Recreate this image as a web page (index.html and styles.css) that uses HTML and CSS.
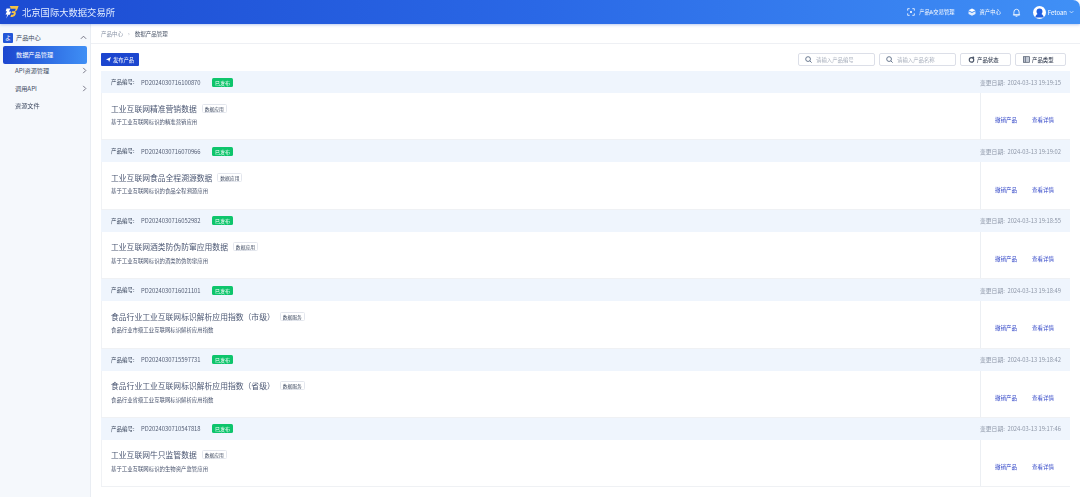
FILE: index.html
```html
<!DOCTYPE html>
<html lang="zh-CN">
<head>
<meta charset="utf-8">
<title>数据产品管理</title>
<link rel="stylesheet" href="styles.css">
</head>
<body>
<div class="app">
  <header class="topbar">
    <div class="brand">
      <svg class="logo" viewBox="0 0 14 14"><path d="M4.6 1 H13.6 L12.3 4.6 Q11.7 6.2 10 6.7 Q11.4 7.2 10.7 9.2 Q9.8 12 7.2 12 H5.4 L6.2 9.8 H7.6 Q8.4 9.8 8.7 9 Q9 8 8.1 8 H6.4 L7 6.2 H8.8 Q10 6.2 10.4 5 L10.7 3.8 H6 Z" fill="#f6c445"/><path d="M1.6 3.6 H5.6 L3.9 6.6 H6 L4.8 9.8 H3.4 L1.2 13.4 L2.4 9.4 H.5 L2.1 6.2 H.6 Z" fill="#fff"/></svg>
      <span class="brand-name">北京国际大数据交易所</span>
    </div>
    <nav class="topnav">
      <span class="topitem"><svg class="ticon" viewBox="0 0 12 12"><path d="M1 4V1h3M8 1h3v3M11 8v3H8M4 11H1V8" fill="none" stroke="#fff" stroke-width="1.2"/><circle cx="6" cy="6" r="1.6" fill="#fff"/></svg>产品&amp;交易管理</span>
      <span class="topitem"><svg class="ticon" viewBox="0 0 12 12"><path d="M6 .8 L11.2 3.4 L6 6 L.8 3.4 Z" fill="#fff"/><path d="M.8 4.8 L6 7.4 L11.2 4.8 V9 L6 11.6 L.8 9 Z" fill="#fff" opacity=".85"/></svg>资产中心</span>
      <svg class="bell" viewBox="0 0 12 12"><path d="M2.5 9.2 V5.5 a3.5 3.8 0 0 1 7 0 V9.2 Z M1.2 9.2 H10.8 M4.8 11 H7.2" fill="none" stroke="#fff" stroke-width="1.1"/></svg>
      <span class="user">
        <svg class="avatar" viewBox="0 0 14 14"><circle cx="7" cy="7" r="7" fill="#fff"/><circle cx="7" cy="6" r="3.2" fill="#1f5fe0"/><path d="M2.5 12.4 a4.5 4.4 0 0 1 9 0 Z" fill="#1f5fe0"/></svg>
        <span>Fetoan</span>
        <svg class="caret" viewBox="0 0 8 5"><path d="M1 1 L4 4 L7 1" fill="none" stroke="#fff" stroke-width="1"/></svg>
      </span>
    </nav>
  </header>
  <div class="shell">
    <aside class="sidebar">
      <div class="side-group"><span class="side-badge">よ</span><span class="side-title">产品中心</span><svg class="chev" viewBox="0 0 8 5" width="7" height="5"><path d="M1 4 L4 1 L7 4" fill="none" stroke="#667" stroke-width="1"/></svg></div>
      <div class="side-active">数据产品管理</div>
      <div class="side-item"><span>API资源管理</span><svg class="chev" viewBox="0 0 5 8" width="5" height="7"><path d="M1 1 L4 4 L1 7" fill="none" stroke="#667" stroke-width="1"/></svg></div>
      <div class="side-item"><span>调用API</span><svg class="chev" viewBox="0 0 5 8" width="5" height="7"><path d="M1 1 L4 4 L1 7" fill="none" stroke="#667" stroke-width="1"/></svg></div>
      <div class="side-item"><span>资源文件</span></div>
    </aside>
    <main class="main">
      <div class="crumbs"><span class="crumb-muted">产品中心</span><span class="crumb-sep">›</span><span class="crumb-now">数据产品管理</span></div>
      <div class="content">
        <div class="toolbar">
          <button class="primary"><svg viewBox="0 0 8 8" width="5" height="5"><path d="M0 4 L8 0 L5 8 L4 5 Z" fill="#fff"/></svg>发布产品</button>
          <div class="filters">
            <div class="search"><svg viewBox="0 0 10 10" width="7" height="7"><circle cx="4.4" cy="4.4" r="3.4" fill="none" stroke="#5b6b85" stroke-width="1.3"/><path d="M7 7 L9.5 9.5" stroke="#5b6b85" stroke-width="1.3"/></svg>请输入产品编号</div>
            <div class="search"><svg viewBox="0 0 10 10" width="7" height="7"><circle cx="4.4" cy="4.4" r="3.4" fill="none" stroke="#5b6b85" stroke-width="1.3"/><path d="M7 7 L9.5 9.5" stroke="#5b6b85" stroke-width="1.3"/></svg>请输入产品名称</div>
            <div class="filter f-status"><svg viewBox="0 0 10 10" width="7" height="7"><circle cx="5" cy="5.6" r="3.2" fill="none" stroke="#4a5568" stroke-width="1.6"/><circle cx="7.5" cy="2" r="1.4" fill="#4a5568"/></svg>产品状态</div>
            <div class="filter f-type"><svg viewBox="0 0 10 10" width="7" height="7"><rect x=".6" y="1" width="8.8" height="8" fill="#c4cad6" stroke="#4a5568"/><path d="M3.4 1 V9" stroke="#4a5568"/></svg>产品类型</div>
          </div>
        </div>
        <section class="card">
          <div class="card-head"><span class="label">产品编号:</span><span class="code">PD2024030716100870</span><span class="status">已发布</span><span class="date">变更日期:&nbsp;&nbsp;2024-03-13 19:19:15</span></div>
          <div class="card-body"><div class="info"><div class="title-row"><span class="title">工业互联网精准营销数据</span><span class="tag">数据应用</span></div><p class="desc">基于工业互联网标识的精准营销应用</p></div><div class="actions"><a>撤销产品</a><a>查看详情</a></div></div>
        </section>
        <section class="card">
          <div class="card-head"><span class="label">产品编号:</span><span class="code">PD2024030716070966</span><span class="status">已发布</span><span class="date">变更日期:&nbsp;&nbsp;2024-03-13 19:19:02</span></div>
          <div class="card-body"><div class="info"><div class="title-row"><span class="title">工业互联网食品全程溯源数据</span><span class="tag">数据应用</span></div><p class="desc">基于工业互联网标识的食品全程溯源应用</p></div><div class="actions"><a>撤销产品</a><a>查看详情</a></div></div>
        </section>
        <section class="card">
          <div class="card-head"><span class="label">产品编号:</span><span class="code">PD2024030716052982</span><span class="status">已发布</span><span class="date">变更日期:&nbsp;&nbsp;2024-03-13 19:18:55</span></div>
          <div class="card-body"><div class="info"><div class="title-row"><span class="title">工业互联网酒类防伪防窜应用数据</span><span class="tag">数据应用</span></div><p class="desc">基于工业互联网标识的酒类防伪防窜应用</p></div><div class="actions"><a>撤销产品</a><a>查看详情</a></div></div>
        </section>
        <section class="card">
          <div class="card-head"><span class="label">产品编号:</span><span class="code">PD2024030716021101</span><span class="status">已发布</span><span class="date">变更日期:&nbsp;&nbsp;2024-03-13 19:18:49</span></div>
          <div class="card-body"><div class="info"><div class="title-row"><span class="title">食品行业工业互联网标识解析应用指数（市级）</span><span class="tag">数据服务</span></div><p class="desc">食品行业市级工业互联网标识解析应用指数</p></div><div class="actions"><a>撤销产品</a><a>查看详情</a></div></div>
        </section>
        <section class="card">
          <div class="card-head"><span class="label">产品编号:</span><span class="code">PD2024030715597731</span><span class="status">已发布</span><span class="date">变更日期:&nbsp;&nbsp;2024-03-13 19:18:42</span></div>
          <div class="card-body"><div class="info"><div class="title-row"><span class="title">食品行业工业互联网标识解析应用指数（省级）</span><span class="tag">数据服务</span></div><p class="desc">食品行业省级工业互联网标识解析应用指数</p></div><div class="actions"><a>撤销产品</a><a>查看详情</a></div></div>
        </section>
        <section class="card">
          <div class="card-head"><span class="label">产品编号:</span><span class="code">PD2024030710547818</span><span class="status">已发布</span><span class="date">变更日期:&nbsp;&nbsp;2024-03-13 19:17:46</span></div>
          <div class="card-body"><div class="info"><div class="title-row"><span class="title">工业互联网牛只监管数据</span><span class="tag">数据应用</span></div><p class="desc">基于工业互联网标识的生物资产监管应用</p></div><div class="actions"><a>撤销产品</a><a>查看详情</a></div></div>
        </section>
      </div>
    </main>
  </div>
</div>
</body>
</html>
```
FILE: styles.css
```css
* { box-sizing: border-box; }
html, body { margin: 0; height: 100%; overflow: hidden; background: #fff; }
body { font-family: "Noto Sans CJK SC", "Noto Sans", sans-serif; color: #3a4660; }
.app { height: 497px; display: flex; flex-direction: column; filter: blur(0.5px); }
.topbar {
  height: 24px; flex: none; display: flex; align-items: center; justify-content: space-between;
  background: linear-gradient(90deg, #1c4bd2 0%, #2a68e6 50%, #4090f6 100%);
  border-top-right-radius: 7px; padding: 0 6px 0 5px; color: #fff;
  box-shadow: 0 1px 3px rgba(30, 80, 200, .3); position: relative; z-index: 2;
}
.brand { display: flex; align-items: center; gap: 3px; }
.logo { display: block; width: 14px; height: 14px; }
.brand-name { font-size: 9.3px; color: #e4edff; }
.topnav { display: flex; align-items: center; font-size: 5.3px; }
.topitem { display: flex; align-items: center; gap: 4px; margin-right: 11px; }
.topitem:first-child { margin-right: 13px; }
.ticon { width: 8px; height: 8px; }
.bell { width: 9px; height: 9px; margin-right: 12px; }
.user { display: flex; align-items: center; gap: 2px; font-size: 6px; }
.avatar { width: 13px; height: 13px; }
.caret { width: 5px; height: 4px; }
.shell { flex: 1; display: flex; min-height: 0; }
.sidebar { width: 91px; flex: none; background: #f5f8fc; border-right: 1px solid #e9edf3; font-size: 6.2px; color: #414c63; padding-top: 6px; }
.side-group { height: 15.5px; display: flex; align-items: center; padding: 0 3px; }
.side-badge { width: 10px; height: 10px; border-radius: 1px; background: #2356d8; color: #fff; font-size: 6px; display: flex; align-items: center; justify-content: center; margin-right: 3px; }
.side-title { flex: 1; }
.side-active { height: 18px; margin: 0 3px -1.5px 3px; width: 84px; border-radius: 2px; background: linear-gradient(90deg, #1c46cf, #3f8ff5); color: #fff; display: flex; align-items: center; padding-left: 13px; position: relative; }
.side-item { height: 17.5px; display: flex; align-items: center; justify-content: space-between; padding: 0 2px 0 15px; }
.chev { display: block; }
.side-item .chev { margin-right: 1px; }
.main { flex: 1; min-width: 0; display: flex; flex-direction: column; }
.crumbs { height: 20px; flex: none; display: flex; align-items: center; padding-left: 10px; font-size: 5.5px; border-bottom: 1px solid #eef0f4; }
.crumb-muted { color: #8b95a7; }
.crumb-sep { margin: 0 5px; color: #8b95a7; }
.crumb-now { color: #4a5568; }
.content { padding: 9px 10px 0 10px; flex: 1; overflow: hidden; }
.toolbar { height: 18px; display: flex; align-items: flex-start; justify-content: space-between; }
.primary { height: 13px; width: 38px; border: 0; border-radius: 1px; background: #1c46cf; color: #fff; font: inherit; font-size: 5.3px; display: flex; align-items: center; justify-content: center; gap: 2px; padding: 0; }
.filters { display: flex; gap: 4px; margin-right: 4px; }
.search, .filter { height: 13px; border: 1px solid #dcdfe8; border-radius: 2px; display: flex; align-items: center; font-size: 5.4px; background: #fff; }
.search { width: 77px; padding-left: 6px; gap: 4px; color: #a9b0bd; }
.filter { padding-left: 7px; gap: 2px; color: #3b4457; font-weight: 500; }
.f-status { width: 51px; }
.f-type { width: 51px; }
.card { height: 69.4px; }
.card-head { height: 22px; background: #eff5fd; display: flex; align-items: center; padding: 0 9px 0 10px; font-size: 5.5px; }
.label { color: #3e4a60; width: 30px; }
.code { color: #566077; width: 71px; font-size: 5.85px; }
.status { width: 21px; height: 9px; background: #0ec56c; border-radius: 1.5px; color: #fff; font-size: 5px; display: flex; align-items: center; justify-content: center; }
.date { margin-left: auto; color: #8e97a8; font-size: 5.8px; }
.card-body { height: 47.4px; display: flex; border-left: 1px solid #f0f2f5; border-bottom: 1px solid #eff1f4; }
.info { flex: 1; padding: 8px 0 0 9px; }
.title-row { display: flex; align-items: center; gap: 5px; height: 14px; }
.title { font-size: 7.8px; color: #4a5672; }
.tag { height: 9px; width: 25px; border: 1px solid #e3e6ed; border-radius: 1.5px; font-size: 4.8px; display: flex; align-items: center; justify-content: center; color: #3e4a60; }
.desc { margin: 3px 0 0; font-size: 5.4px; color: #4a556e; line-height: 9px; }
.actions { width: 90px; flex: none; border-left: 1px solid #eceff3; display: flex; align-items: center; gap: 15px; padding: 8px 0 0 14px; font-size: 5.5px; color: #3448c8; }
```
